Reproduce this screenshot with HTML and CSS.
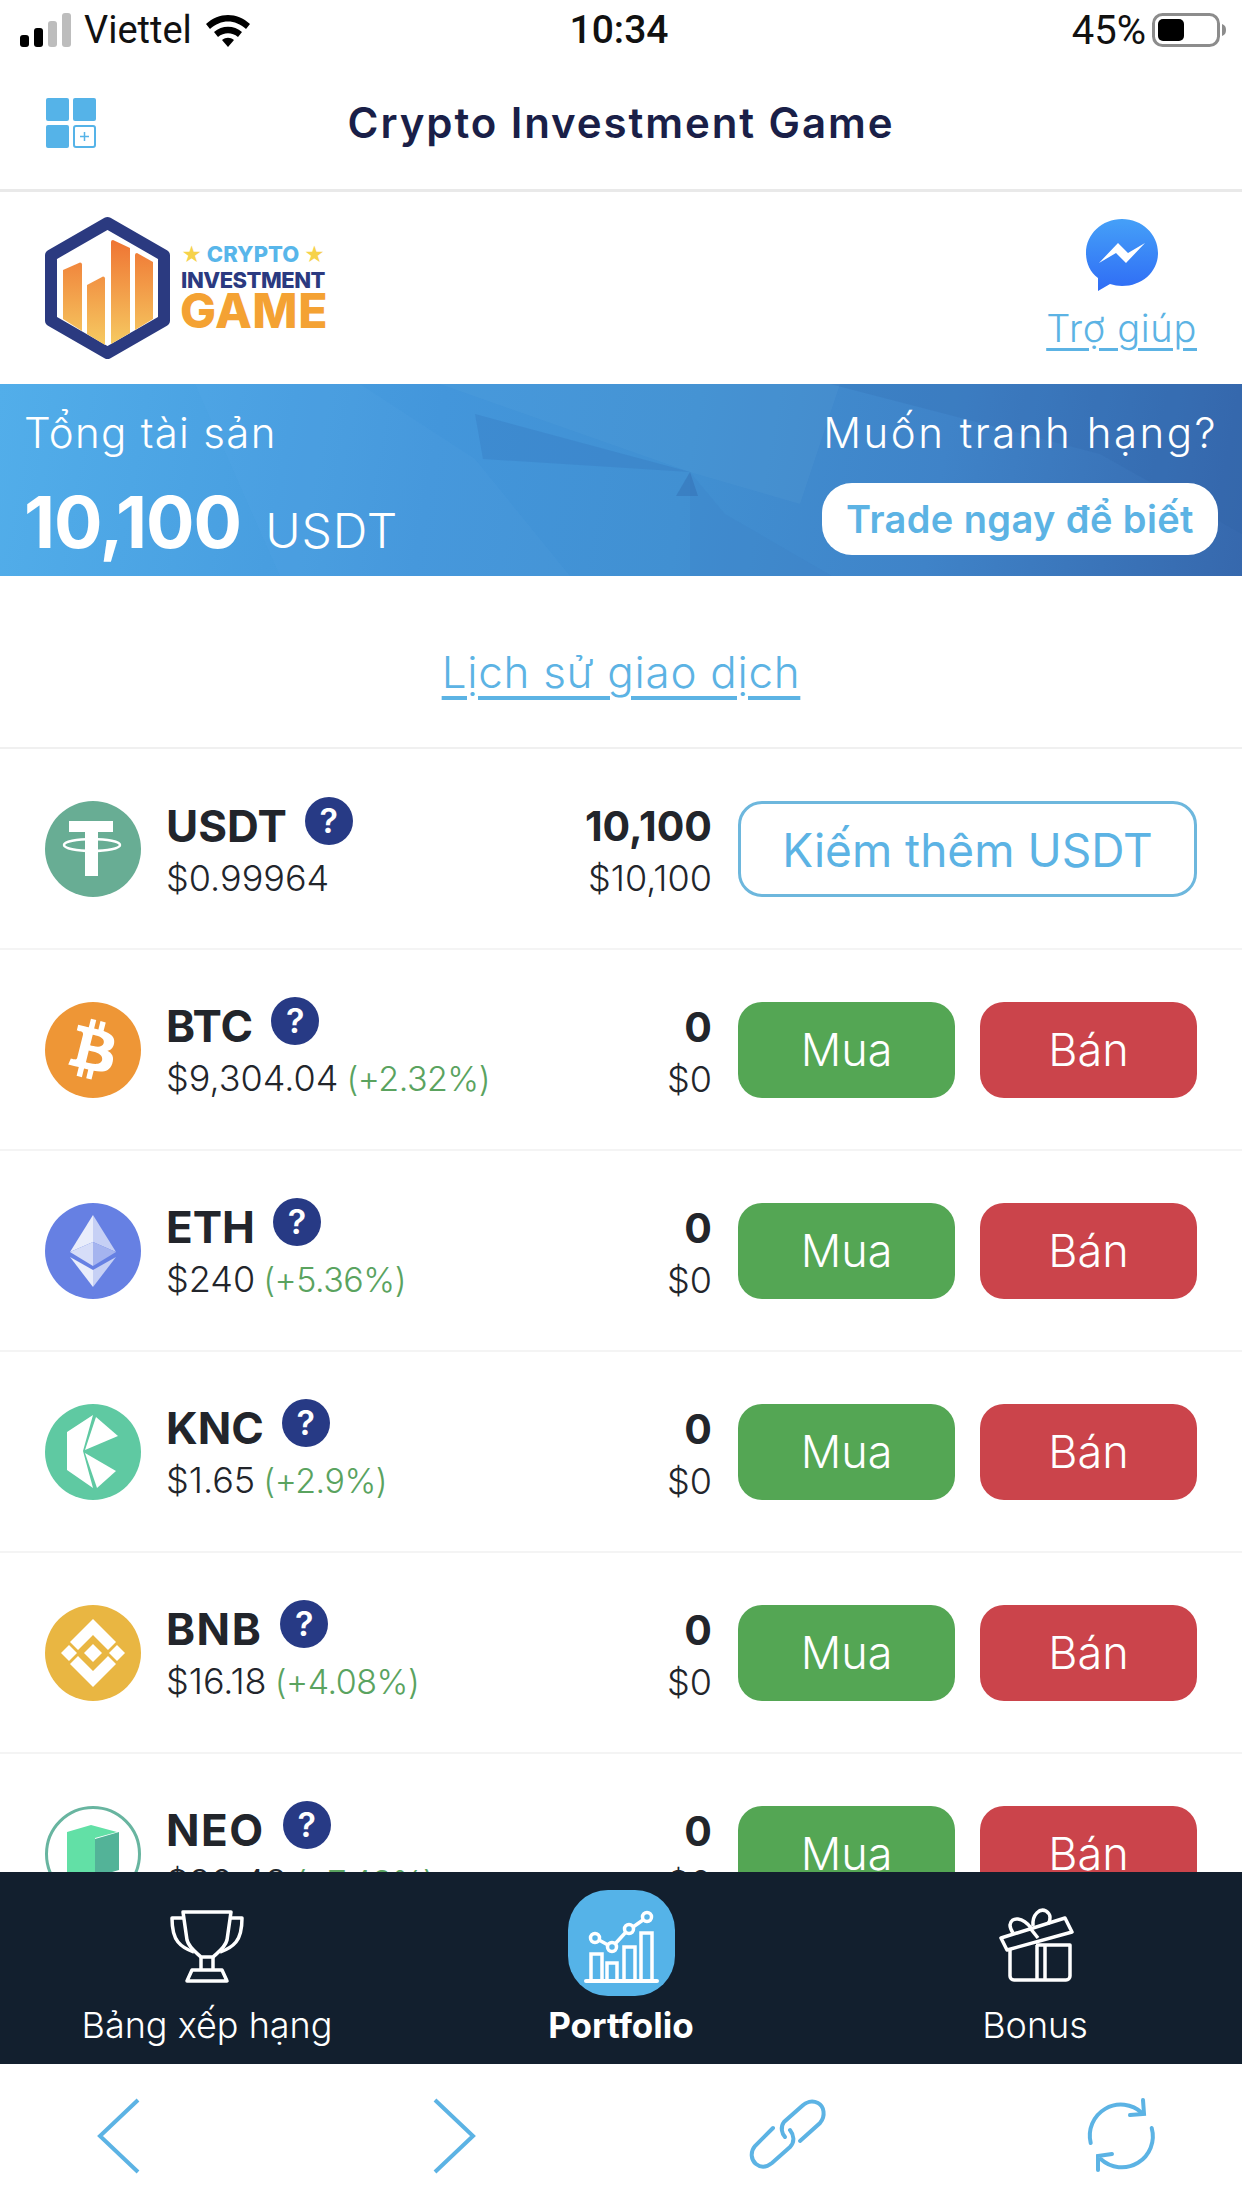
FILE: index.html
```html
<!DOCTYPE html>
<html>
<head>
    <meta charset="UTF-8">
    <title>Crypto Investment Game</title>
    <link rel="stylesheet" href="styles.css">
</head>
<body>
<div class="app">
    <div class="status-bar">
        <div class="status-left">
            <svg class="signal" viewBox="0 0 52 34"><rect x="0" y="22" width="9" height="12" rx="3" fill="#000"/><rect x="14" y="15" width="9" height="19" rx="3" fill="#000"/><rect x="28" y="8" width="9" height="26" rx="3" fill="#bdbdbd"/><rect x="42" y="0" width="9" height="34" rx="3" fill="#bdbdbd"/></svg>
            <span>Viettel</span>
            <svg class="wifi" viewBox="0 0 48 34"><path d="M2 11C15-1 33-1 46 11l-4 5C31 6 17 6 6 16z" fill="#000"/><path d="M10 19c8-7 20-7 28 0l-4 5c-6-5-14-5-20 0z" fill="#000"/><path d="M18 27c4-3 8-3 12 0l-6 7z" fill="#000"/></svg>
        </div>
        <div class="status-time">10:34</div>
        <div class="status-right">
            <span>45%</span>
            <svg class="battery" viewBox="0 0 74 34"><rect x="1.500" y="1.500" width="65" height="31" rx="9" fill="none" stroke="#8c8c8c" stroke-width="3"/><rect x="6" y="6" width="26" height="22" rx="5" fill="#000"/><path d="M70 11c3 1 4 3 4 6s-1 5-4 6z" fill="#8c8c8c"/></svg>
        </div>
    </div>

    <div class="nav-bar">
        <svg class="nav-icon" viewBox="0 0 50 50">
            <rect x="0" y="0" width="23" height="23" rx="2" fill="#55b3e8"/>
            <rect x="27" y="0" width="23" height="23" rx="2" fill="#55b3e8"/>
            <rect x="0" y="27" width="23" height="23" rx="2" fill="#55b3e8"/>
            <rect x="28" y="28" width="21" height="21" rx="2" fill="#fff" stroke="#55b3e8" stroke-width="2"/>
            <path d="M38.500 34v9M34 38.500h9" stroke="#55b3e8" stroke-width="1.500"/>
        </svg>
        <div class="nav-title">Crypto Investment Game</div>
    </div>

    <div class="brand-row">
        <div class="logo">
            <svg class="logo-hex" viewBox="0 0 125 144">
                <defs>
                    <linearGradient id="barFill" gradientUnits="userSpaceOnUse" x1="0" y1="24" x2="0" y2="130">
                        <stop offset="0" stop-color="#ef7433"/>
                        <stop offset="1" stop-color="#f6cb62"/>
                    </linearGradient>
                </defs>
                <path d="M62.500 7L119 39.500V104.500L62.500 137L6 104.500V39.500Z" fill="#fff" stroke="#2b3a80" stroke-width="12" stroke-linejoin="round"/>
                <path d="M18 54L35 46.500a2 2 0 0 1 2 2V115L18 103Z" fill="url(#barFill)"/>
                <path d="M42 69L58 60.500a2 2 0 0 1 2 2V129L42 118Z" fill="url(#barFill)"/>
                <path d="M66 26a2 2 0 0 1 2-2L85 32V117L66 128Z" fill="url(#barFill)"/>
                <path d="M90 39a2 2 0 0 1 2-2L108 46V103L90 114Z" fill="url(#barFill)"/>
            </svg>
            <div class="logo-text">
                <div class="logo-crypto"><i>★</i> CRYPTO <i>★</i></div>
                <div class="logo-invest">INVESTMENT</div>
                <div class="logo-game">GAME</div>
            </div>
        </div>
        <div class="help">
            <svg class="messenger" viewBox="0 0 72 72">
                <defs>
                    <linearGradient id="msgFill" x1="0" y1="0" x2="0" y2="1">
                        <stop offset="0" stop-color="#45a0f8"/>
                        <stop offset="1" stop-color="#2f6cf5"/>
                    </linearGradient>
                </defs>
                <path d="M36 0C16 0 0 15 0 34c0 10 4 19 12 25v13l12-7c4 1 8 2 12 2 20 0 36-14 36-33S56 0 36 0z" fill="url(#msgFill)"/>
                <path d="M13 44L32 24l10 10 17-10-19 20-10-10z" fill="#fff"/>
            </svg>
            <a class="help-link">Trợ giúp</a>
        </div>
    </div>

    <div class="banner">
        <svg class="banner-art" viewBox="0 0 1242 192" preserveAspectRatio="none">
            <path d="M830 0H1242V150L1100 70z" fill="#2a5da3" opacity=".16"/>
            <path d="M440 0H840L800 120 690 88z" fill="#7cc0ea" opacity=".08"/>
            <path d="M195 0L280 192H570L475 75 360 0z" fill="#6cb8ea" opacity=".07"/>
            <path d="M475 30L690 88 483 75z" fill="#2f66ae" opacity=".2"/>
            <path d="M690 88L725 130 832 192H690z" fill="#2f66ae" opacity=".08"/>
            <path d="M690 88L676 112 698 112z" fill="#2a5da3" opacity=".3"/>
        </svg>
        <div class="banner-col">
            <div class="banner-label">Tổng tài sản</div>
            <div class="banner-total"><b>10,100</b><span>USDT</span></div>
        </div>
        <div class="banner-col banner-col-right">
            <div class="banner-label banner-label-wide">Muốn tranh hạng?</div>
            <button class="trade-btn">Trade ngay để biết</button>
        </div>
    </div>

    <div class="list-wrap">
        <div class="history-row"><a class="history-link">Lịch sử giao dịch</a></div>

        <div class="coin-row">
            <svg class="coin-icon" viewBox="0 0 96 96"><circle cx="48" cy="48" r="48" fill="#68ad94"/><path d="M24 20h44v11H53v44H40V31H24z" fill="#fff"/><ellipse cx="47" cy="44" rx="28" ry="6" fill="none" stroke="#fff" stroke-width="2.500"/></svg>
            <div class="coin-info">
                <div class="coin-name">USDT <span class="hint">?</span></div>
                <div class="coin-price">$0.99964</div>
            </div>
            <div class="coin-amount"><b>10,100</b><span>$10,100</span></div>
            <div class="coin-actions"><button class="btn btn-earn">Kiếm thêm USDT</button></div>
        </div>

        <div class="coin-row">
            <svg class="coin-icon" viewBox="0 0 96 96"><circle cx="48" cy="48" r="48" fill="#ee9636"/><g transform="scale(4)"><path fill="#fff" fill-rule="evenodd" d="M17.288 10.291c.24-1.59-.974-2.45-2.64-3.03l.54-2.153-1.315-.33-.525 2.107c-.345-.087-.705-.167-1.064-.25l.526-2.127-1.32-.33-.54 2.165c-.285-.067-.565-.132-.84-.2l-1.815-.45-.35 1.407s.975.225.955.236c.535.136.63.486.615.766l-1.477 5.92c-.075.166-.24.406-.614.314.015.02-.96-.24-.96-.24l-.66 1.51 1.71.426.93.242-.54 2.19 1.32.327.54-2.17c.36.1.705.19 1.05.273l-.51 2.154 1.32.33.545-2.19c2.24.427 3.93.257 4.64-1.774.57-1.637-.03-2.58-1.217-3.196.854-.193 1.5-.76 1.68-1.93h.01zM14.278 14.511c-.404 1.64-3.157.75-4.05.53l.72-2.9c.896.23 3.757.67 3.33 2.37zM14.688 10.271c-.37 1.49-2.662.735-3.405.55l.654-2.64c.744.18 3.137.524 2.75 2.084v.006z"/></g></svg>
            <div class="coin-info">
                <div class="coin-name">BTC <span class="hint">?</span></div>
                <div class="coin-price">$9,304.04 <em>(+2.32%)</em></div>
            </div>
            <div class="coin-amount"><b>0</b><span>$0</span></div>
            <div class="coin-actions"><button class="btn btn-buy">Mua</button><button class="btn btn-sell">Bán</button></div>
        </div>

        <div class="coin-row">
            <svg class="coin-icon" viewBox="0 0 96 96"><circle cx="48" cy="48" r="48" fill="#6680e3"/><path d="M48 12v27l-23 10z" fill="#e9edfb"/><path d="M48 12v27l23 10z" fill="#c6d0f5"/><path d="M25 49l23-10v24z" fill="#d6ddf8"/><path d="M71 49L48 39v24z" fill="#a5b4ef"/><path d="M25 54l23 13v17z" fill="#e9edfb"/><path d="M71 54L48 67v17z" fill="#c6d0f5"/></svg>
            <div class="coin-info">
                <div class="coin-name">ETH <span class="hint">?</span></div>
                <div class="coin-price">$240 <em>(+5.36%)</em></div>
            </div>
            <div class="coin-amount"><b>0</b><span>$0</span></div>
            <div class="coin-actions"><button class="btn btn-buy">Mua</button><button class="btn btn-sell">Bán</button></div>
        </div>

        <div class="coin-row">
            <svg class="coin-icon" viewBox="0 0 96 96"><circle cx="48" cy="48" r="48" fill="#5fc9a2"/><path d="M22 28L48 11 38 47l10 37-26-18z" fill="#fff"/><path d="M51 13l22 19-33 14z" fill="#fff"/><path d="M40 49l31 18-19 17z" fill="#fff"/></svg>
            <div class="coin-info">
                <div class="coin-name">KNC <span class="hint">?</span></div>
                <div class="coin-price">$1.65 <em>(+2.9%)</em></div>
            </div>
            <div class="coin-amount"><b>0</b><span>$0</span></div>
            <div class="coin-actions"><button class="btn btn-buy">Mua</button><button class="btn btn-sell">Bán</button></div>
        </div>

        <div class="coin-row">
            <svg class="coin-icon" viewBox="0 0 96 96"><circle cx="48" cy="48" r="48" fill="#e9b642"/><g fill="#fff"><path d="M48 14l23 23-8 8-15-15-15 15-8-8z"/><path d="M48 82L25 59l8-8 15 15 15-15 8 8z"/><path d="M16 48l8-8 8 8-8 8z"/><path d="M64 48l8-8 8 8-8 8z"/><path d="M48 39l9 9-9 9-9-9z"/></g></svg>
            <div class="coin-info">
                <div class="coin-name coin-name-wide">BNB <span class="hint">?</span></div>
                <div class="coin-price">$16.18 <em>(+4.08%)</em></div>
            </div>
            <div class="coin-amount"><b>0</b><span>$0</span></div>
            <div class="coin-actions"><button class="btn btn-buy">Mua</button><button class="btn btn-sell">Bán</button></div>
        </div>

        <div class="coin-row">
            <svg class="coin-icon" viewBox="0 0 96 96"><circle cx="48" cy="48" r="46.500" fill="#fff" stroke="#68b5a0" stroke-width="3"/><path d="M22 26l24-7 26 7-22 6v45l-28-8z" fill="#62e0a6"/><path d="M50 33l24-7v38l-24 7z" fill="#53b398"/></svg>
            <div class="coin-info">
                <div class="coin-name coin-name-wide">NEO <span class="hint">?</span></div>
                <div class="coin-price">$20.48 <em>(+7.43%)</em></div>
            </div>
            <div class="coin-amount"><b>0</b><span>$0</span></div>
            <div class="coin-actions"><button class="btn btn-buy">Mua</button><button class="btn btn-sell">Bán</button></div>
        </div>
    </div>

    <div class="tab-bar">
        <div class="tab">
            <div class="tab-icon">
                <svg viewBox="0 0 80 80" width="80" height="80" fill="none" stroke="#fff" stroke-width="3.500" stroke-linejoin="round">
                    <path d="M16 9H64L60 37C58 45 50 50 46 54H34C30 50 22 45 20 37Z"/>
                    <path d="M16 15H5C5 27 7 34 11 39 15 44 21 47 27 49"/>
                    <path d="M64 15H75C75 27 73 34 69 39 65 44 59 47 53 49"/>
                    <path d="M34 54V67M46 54V67"/>
                    <path d="M25 67H55L60 78H20Z"/>
                </svg>
            </div>
            <div class="tab-label">Bảng xếp hạng</div>
        </div>
        <div class="tab tab-active">
            <div class="tab-icon">
                <svg viewBox="0 0 80 80" width="80" height="80" fill="none" stroke="#fff" stroke-width="3.500">
                    <path d="M5 78H76" stroke-width="4" stroke-linecap="round"/>
                    <path d="M10 78V51H21V78M26 78V60H36V78M43 78V44H54V78M60 78V30H71V78"/>
                    <circle cx="14" cy="35" r="4.500"/><circle cx="31" cy="44" r="4.500"/><circle cx="48" cy="26" r="4.500"/><circle cx="66" cy="14" r="4.500"/>
                    <path d="M18 37L27 42M34 41L45 29M52 24L62 17"/>
                </svg>
            </div>
            <div class="tab-label tab-label-bold">Portfolio</div>
        </div>
        <div class="tab">
            <div class="tab-icon">
                <svg viewBox="0 0 80 80" width="80" height="80" fill="none" stroke="#fff" stroke-width="3.500" stroke-linejoin="round">
                    <path d="M15 46V73a4 4 0 0 0 4 4H71a4 4 0 0 0 4-4V42H41"/>
                    <path d="M42 42V77M50 42V77"/>
                    <path d="M6 35L70 15 77 29 12 47Z"/>
                    <path d="M35 25L43 35"/>
                    <path d="M36 25C28 14 16 13 15 22c0 3 1 5 3 8"/>
                    <path d="M38 23C37 11 45 5 51 8c5 3 5 9 2 13"/>
                </svg>
            </div>
            <div class="tab-label">Bonus</div>
        </div>
    </div>

    <div class="bottom-bar">
        <svg class="tool-icon" viewBox="0 0 80 80" fill="none" stroke="#5cb3e4" stroke-width="4"><path d="M58 4L20 40 58 76"/></svg>
        <svg class="tool-icon" viewBox="0 0 80 80" fill="none" stroke="#5cb3e4" stroke-width="4"><path d="M21 4L59 40 21 76"/></svg>
        <svg class="tool-icon" viewBox="0 0 80 80" fill="none" stroke="#5cb3e4" stroke-width="4" stroke-linecap="round"><path d="M52 45L72 27C78 20 76 10 70 7 64 4 58 6 54 10L36 26C32 31 34 38 37 41"/><path d="M25 32L7 50C2 56 3 64 8 68 13 72 19 71 24 67L42 51C47 46 46 39 42 34"/></svg>
        <svg class="tool-icon" viewBox="0 0 80 80" fill="none" stroke="#5cb3e4" stroke-width="4" stroke-linecap="round"><path d="M8.700 47A31 31 0 0 1 60 17"/><path d="M61 4L62 18 48 19"/><path d="M69.700 32A31 31 0 0 1 18.700 63"/><path d="M16 74V60L30 58"/></svg>
    </div>
</div>
</body>
</html>
```

FILE: styles.css
```css
* {
    box-sizing: border-box;
}
body {
    margin: 0;
    background-color: #fff;
    font-family: 'Inter', 'Noto Sans', sans-serif;
    color: #22252b;
}
em {
    font-style: normal;
}
a {
    cursor: pointer;
}
button {
    font-family: inherit;
    border: none;
    padding: 0;
}
.app {
    width: 1242px;
    height: 2208px;
    display: flex;
    flex-direction: column;
    overflow: hidden;
}
.status-bar {
    height: 60px;
    padding: 0 16px 0 20px;
    display: grid;
    grid-template-columns: 1fr auto 1fr;
    align-items: center;
    font-size: 38px;
    color: #111;
    font-family: 'Roboto', sans-serif;
}
.status-left {
    display: flex;
    align-items: center;
    gap: 12px;
}
.signal {
    width: 52px;
    height: 34px;
}
.wifi {
    width: 48px;
    height: 34px;
}
.status-time {
    font-weight: 500;
    font-size: 39px;
    margin-right: 8px;
}
.status-right {
    display: flex;
    justify-content: flex-end;
    align-items: center;
    gap: 6px;
    font-size: 40px;
}
.battery {
    width: 74px;
    height: 34px;
}
.nav-bar {
    height: 132px;
    position: relative;
    display: flex;
    align-items: center;
    justify-content: center;
    padding-bottom: 4px;
    border-bottom: 3px solid #e9e9e9;
}
.nav-icon {
    position: absolute;
    left: 46px;
    top: 38px;
    width: 50px;
    height: 50px;
}
.nav-title {
    font-size: 42px;
    font-weight: 600;
    color: #1a1f48;
    letter-spacing: 1.9px;
}
.brand-row {
    height: 192px;
    padding: 0 45px;
    display: flex;
    justify-content: space-between;
    align-items: center;
}
.logo {
    display: flex;
    align-items: center;
    gap: 10px;
}
.logo-hex {
    width: 125px;
    height: 144px;
}
.logo-text {
    width: 146px;
    margin-bottom: 8px;
    text-align: center;
    white-space: nowrap;
    font-weight: 800;
}
.logo-crypto {
    font-size: 22px;
    line-height: 26px;
    color: #58b6ea;
}
.logo-crypto i {
    font-style: normal;
    color: #f6d24b;
    font-size: 20px;
}
.logo-invest {
    font-size: 22px;
    line-height: 25px;
    color: #2b3a80;
    letter-spacing: -0.5px;
}
.logo-game {
    font-size: 48px;
    line-height: 35px;
    color: #f4a233;
    letter-spacing: 0.5px;
}
.help {
    display: flex;
    flex-direction: column;
    align-items: center;
    gap: 14px;
    margin-bottom: 6px;
}
.messenger {
    width: 72px;
    height: 72px;
}
.help-link {
    color: #5cb3e4;
    font-size: 38px;
    font-weight: 300;
    letter-spacing: 0.7px;
    text-decoration: underline;
    text-underline-offset: 6px;
}
.banner {
    height: 192px;
    position: relative;
    padding: 24px 24px 0;
    display: flex;
    justify-content: space-between;
    color: #fff;
    background: linear-gradient(100deg, #52aeea 0%, #4396db 35%, #4190d2 55%, #3f83c8 75%, #3668ad 100%);
    overflow: hidden;
}
.banner-art {
    position: absolute;
    left: 0;
    top: 0;
    width: 100%;
    height: 100%;
}
.banner-col {
    position: relative;
    display: flex;
    flex-direction: column;
}
.banner-col-right {
    align-items: flex-end;
}
.banner-label {
    font-size: 42px;
    font-weight: 300;
    line-height: 50px;
    letter-spacing: 1.3px;
}
.banner-label-wide {
    letter-spacing: 2.5px;
}
.banner-total {
    margin-top: 22px;
    display: flex;
    align-items: baseline;
    gap: 24px;
}
.banner-total b {
    font-size: 72px;
    font-weight: 700;
    line-height: 84px;
    letter-spacing: -1px;
}
.banner-total span {
    font-size: 48px;
    font-weight: 300;
    letter-spacing: 1px;
}
.trade-btn {
    margin-top: 25px;
    width: 396px;
    height: 72px;
    border-radius: 30px;
    background-color: #fff;
    color: #5cb3e4;
    font-size: 38px;
    font-weight: 600;
    letter-spacing: 0.4px;
}
.list-wrap {
    flex: 1;
    min-height: 0;
    overflow: hidden;
}
.history-row {
    height: 173px;
    padding-top: 20px;
    display: flex;
    align-items: center;
    justify-content: center;
    border-bottom: 2px solid #f0f0f0;
}
.history-link {
    color: #5cb3e4;
    font-size: 44px;
    font-weight: 300;
    letter-spacing: 0.7px;
    text-decoration: underline;
    text-underline-offset: 8px;
}
.coin-row {
    height: 201px;
    padding: 0 45px;
    display: flex;
    align-items: center;
    border-bottom: 2px solid #f4f4f4;
}
.coin-icon {
    width: 96px;
    height: 96px;
    flex-shrink: 0;
}
.coin-info {
    flex: 1;
    margin-left: 25px;
    padding-top: 8px;
}
.coin-name {
    font-size: 44px;
    font-weight: 700;
    line-height: 50px;
    display: flex;
    align-items: flex-start;
    gap: 18px;
}
.coin-name-wide {
    letter-spacing: 1.5px;
}
.hint {
    width: 48px;
    height: 48px;
    margin-top: -4px;
    border-radius: 50%;
    background-color: #273a85;
    color: #fff;
    font-size: 34px;
    font-weight: 600;
    line-height: 48px;
    letter-spacing: 0;
    text-align: center;
}
.coin-price {
    font-size: 36px;
    font-weight: 300;
    line-height: 54px;
}
.coin-price em {
    color: #5aa35f;
    font-size: 34px;
    letter-spacing: -0.5px;
    margin-left: -2px;
}
.coin-amount {
    margin-right: 26px;
    padding-top: 8px;
    display: flex;
    flex-direction: column;
    align-items: flex-end;
}
.coin-amount b {
    font-size: 41px;
    font-weight: 700;
    line-height: 50px;
}
.coin-amount span {
    font-size: 36px;
    font-weight: 300;
    line-height: 54px;
}
.coin-actions {
    width: 459px;
    display: flex;
    justify-content: space-between;
}
.btn {
    height: 96px;
    width: 217px;
    border-radius: 24px;
    font-size: 45px;
    font-weight: 300;
    color: #fff;
}
.btn-buy {
    background-color: #54a654;
}
.btn-sell {
    background-color: #cb444b;
}
.btn-earn {
    width: 100%;
    padding-top: 2px;
    background-color: #fff;
    color: #5cb3e4;
    border: 3px solid #6db7dd;
    font-size: 46px;
    font-weight: 400;
}
.tab-bar {
    height: 192px;
    flex-shrink: 0;
    display: grid;
    grid-template-columns: repeat(3, 1fr);
    background-color: #121f2e;
    color: #fff;
}
.tab {
    padding-top: 18px;
    display: flex;
    flex-direction: column;
    align-items: center;
}
.tab-icon {
    width: 107px;
    height: 106px;
    display: flex;
    align-items: center;
    justify-content: center;
    border-radius: 40px;
}
.tab-active .tab-icon {
    background-color: #55b3e8;
}
.tab-label {
    margin-top: 9px;
    font-size: 36px;
    font-weight: 300;
    line-height: 40px;
}
.tab-label-bold {
    font-size: 35px;
    font-weight: 700;
}
.bottom-bar {
    height: 144px;
    flex-shrink: 0;
    padding: 0 80px;
    display: flex;
    align-items: center;
    justify-content: space-between;
}
.tool-icon {
    width: 80px;
    height: 80px;
}
```
